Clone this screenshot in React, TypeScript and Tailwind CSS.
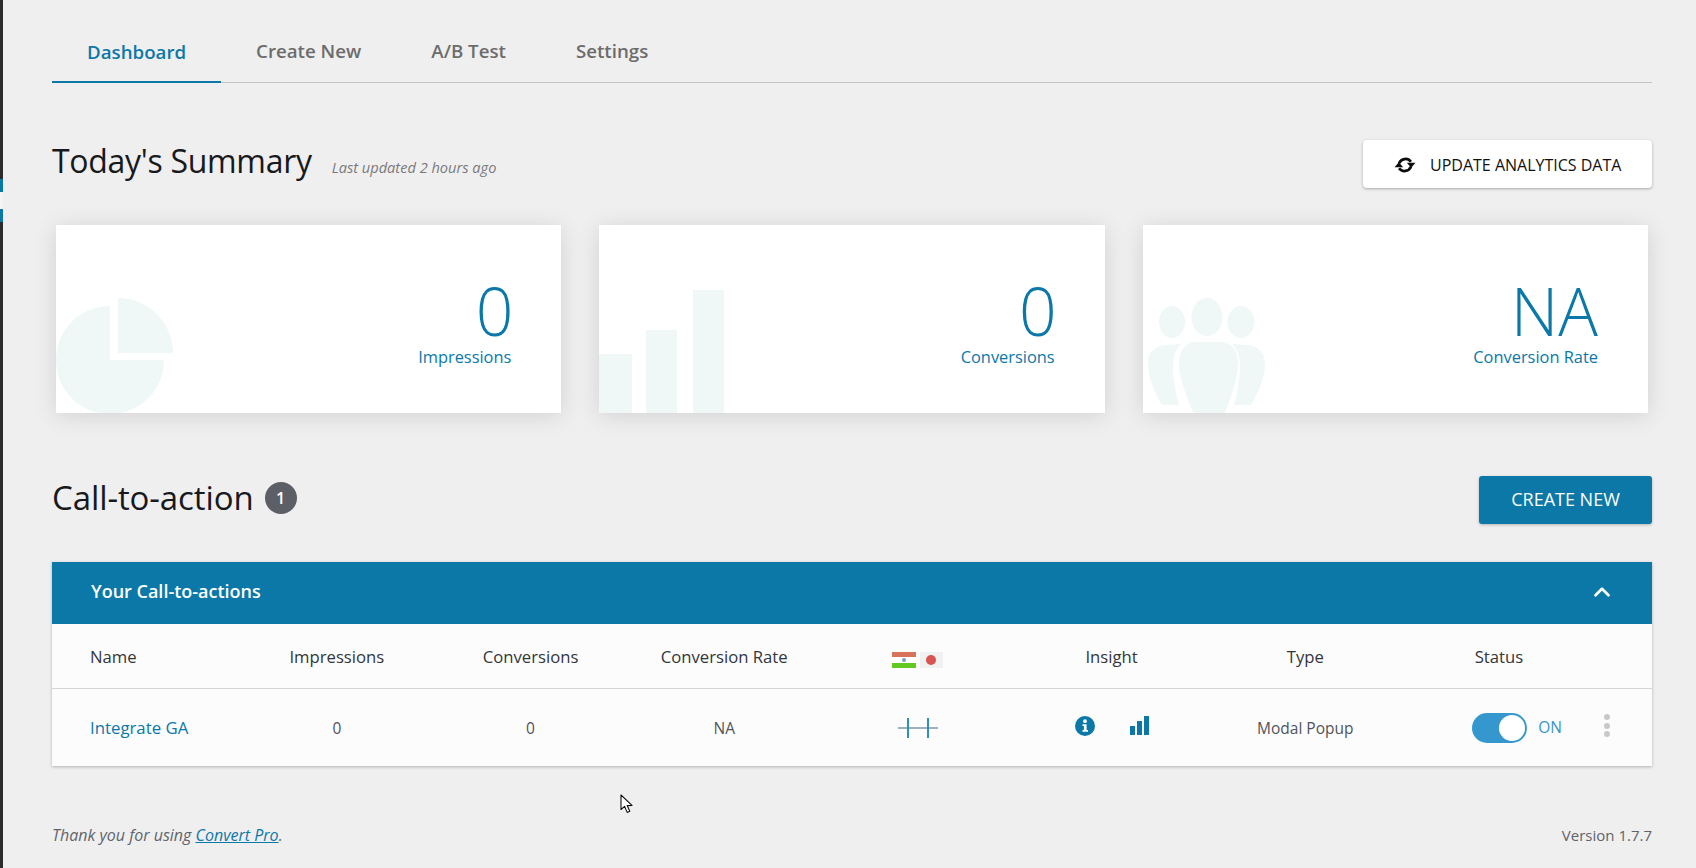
import { ChevronUp } from 'lucide-react';

const FONT = "font-['Open_Sans','Noto_Sans',sans-serif]";

const TABS = ['Dashboard', 'Create New', 'A/B Test', 'Settings'];
const COLUMNS = ['Impressions', 'Conversions', 'Conversion Rate'];

function PieMark() {
  return (
    <svg className="absolute left-0 bottom-0" width="125" height="120" viewBox="0 0 125 120" fill="#f0f7f7">
      <path d="M54 67 L54 13 A54 54 0 1 0 108 67 Z" />
      <path d="M62 5 A55 55 0 0 1 117 60 L62 60 Z" />
    </svg>
  );
}

function BarsMark() {
  return (
    <svg className="absolute left-0 bottom-0" width="125" height="123" viewBox="0 0 125 123" fill="#f0f7f7">
      <rect x="0" y="64" width="33" height="59" />
      <rect x="47" y="40" width="31" height="83" />
      <rect x="94" y="0" width="31" height="123" />
    </svg>
  );
}

function PeopleMark() {
  return (
    <svg className="absolute left-[4px] bottom-0" width="120" height="116" viewBox="0 0 120 116" fill="#f0f7f7">
      <ellipse cx="25" cy="25" rx="13" ry="16" />
      <ellipse cx="94" cy="25" rx="13.5" ry="16" />
      <path d="M18 48 C8 50 1 55 1 66 C1 82 9 98 15 108 L32 108 C28 92 24 74 27 60 C28 55 31 50 34 47 Z" />
      <path d="M101 48 C111 50 118 55 118 66 C118 82 110 98 104 108 L87 108 C91 92 95 74 92 60 C91 55 88 50 85 47 Z" />
      <ellipse cx="60" cy="20" rx="15.5" ry="19" />
      <path d="M48 45 C38 46 32 54 32 66 C32 84 42 104 46 116 L78 116 C82 104 91 84 91 66 C91 54 85 46 75 45 Z" />
    </svg>
  );
}

function SyncIcon() {
  return (
    <svg width="22" height="20" viewBox="0 0 24 22" fill="none" stroke="#0c0c0c" strokeWidth="3">
      <path d="M5.5 9 A7.5 7.5 0 0 1 18.5 7.5" />
      <path d="M18.5 13 A7.5 7.5 0 0 1 5.5 14.5" />
      <path d="M14 8.5 H23.5 L18.8 14 Z" fill="#0c0c0c" stroke="none" />
      <path d="M0.5 13.5 H10 L5.2 8 Z" fill="#0c0c0c" stroke="none" />
    </svg>
  );
}

function StatCard({ value, label, mark }: { value: string; label: string; mark: React.ReactNode }) {
  return (
    <div className="relative h-[188px] flex-1 bg-white shadow-[0_3px_22px_rgba(0,0,0,0.12)] overflow-hidden">
      {mark}
      <div className="relative flex flex-col items-end pt-[53px] pr-[50px] text-[#0b78a8]">
        <span className={`text-[66px] leading-[64px] font-light ${value === '0' ? 'mr-[-2px]' : ''}`}>{value}</span>
        <span className="text-[16.4px] leading-[22px] mt-[4px]">{label}</span>
      </div>
    </div>
  );
}

export default function App() {
  return (
    <div className={`${FONT} relative flex min-h-[868px] bg-[#efeff0] text-[#1d2327] overflow-hidden`}>
      <div className="w-[3px] flex flex-col shrink-0">
        <div className="h-[179px] bg-[#2b2b2e]" />
        <div className="h-[13px] bg-[#0b78a8]" />
        <div className="h-[17px] bg-[#f4f4f4]" />
        <div className="h-[13px] bg-[#0b78a8]" />
        <div className="flex-1 bg-[#2b2b2e]" />
      </div>

      <div className="flex-1 pl-[49px] pr-[44px]">
        <div className="flex h-[83px] items-end border-b border-[#c3c4c7]">
          {TABS.map((t, i) => (
            <div key={t}
              className={`px-[35px] h-[83px] pt-[40px] text-[18.7px] leading-[24px] font-semibold ${i === 0 ? 'border-b-2 border-[#0b78a8] text-[#0b78a8] mb-[-1px]' : 'text-[#6c6c6c]'}`}>
              {t}
            </div>
          ))}
        </div>

        <div className="flex items-center justify-between mt-[57px] h-[48px]">
          <div className="flex items-baseline gap-[20px] mt-[-6px]">
            <h1 className="text-[32px] leading-[44px] font-normal tracking-[-0.3px] text-[#17191c]">Today's Summary</h1>
            <span className="text-[14.6px] italic text-[#7a7a7a]">Last updated 2 hours ago</span>
          </div>
          <button className="flex items-center gap-[14px] w-[289px] h-[48px] pl-[31px] pt-[2px] bg-white rounded-[4px] shadow-[0_1px_3px_rgba(0,0,0,0.3)] text-[16px] font-medium text-[#111]">
            <SyncIcon /> UPDATE ANALYTICS DATA
          </button>
        </div>

        <div className="flex gap-[38px] px-[4px] mt-[37px]">
          <StatCard value="0" label="Impressions" mark={<PieMark />} />
          <StatCard value="0" label="Conversions" mark={<BarsMark />} />
          <StatCard value="NA" label="Conversion Rate" mark={<PeopleMark />} />
        </div>

        <div className="flex items-center justify-between mt-[63px] h-[48px]">
          <div className="flex items-center gap-[11px] mt-[-4px]">
            <h2 className="text-[33px] leading-[44px] font-normal tracking-[-0.1px] text-[#17191c]">Call-to-action</h2>
            <span className="flex h-[32px] w-[32px] items-center justify-center rounded-full bg-[#5c5f66] text-[16px] font-semibold text-white">1</span>
          </div>
          <button className="w-[173px] h-[48px] pb-[2px] rounded-[3px] bg-[#0b78a8] text-[18px] text-white shadow-[0_1px_3px_rgba(0,0,0,0.25)]">CREATE NEW</button>
        </div>

        <div className="mt-[38px] bg-[#fcfcfd] shadow-[0_1px_3px_rgba(0,0,0,0.25)]">
          <div className="flex h-[62px] items-center justify-between bg-[#0b78a8] pl-[39px] pr-[37px] pb-[2px] text-white">
            <span className="text-[18px] font-semibold mb-[2px]">Your Call-to-actions</span>
            <ChevronUp size={26} strokeWidth={2.5} />
          </div>

          <div className="grid h-[65px] grid-cols-[188px_repeat(7,193.7px)_1fr] items-center border-b border-[#d5d5d8] pt-[2px] text-center text-[16.7px] font-medium text-[#33363a]">
            <span className="pl-[38px] text-left">Name</span>
            {COLUMNS.map(c => <span key={c}>{c}</span>)}
            <span className="flex justify-center gap-[4px] pt-[5px]">
              <svg width="24" height="16" viewBox="0 0 24 16">
                <rect width="24" height="5" fill="#d9745c" />
                <rect y="5" width="24" height="6" fill="#fff" />
                <rect y="11" width="24" height="5" fill="#63c81f" />
                <circle cx="12" cy="8" r="2" fill="#7ba3c9" />
              </svg>
              <svg width="23" height="16" viewBox="0 0 23 16">
                <rect width="23" height="16" fill="#f1f1f2" />
                <circle cx="11" cy="8" r="5" fill="#d9534f" />
              </svg>
            </span>
            <span>Insight</span>
            <span>Type</span>
            <span>Status</span>
            <span />
          </div>

          <div className="grid h-[77px] grid-cols-[188px_repeat(7,193.7px)_1fr] items-center text-center text-[15.5px] text-[#50545a]">
            <span className="pl-[38px] text-left text-[16.8px] text-[#0b78a8]">Integrate GA</span>
            <span className="pt-[2px]">0</span>
            <span className="pt-[2px]">0</span>
            <span className="pt-[2px]">NA</span>
            <span className="flex justify-center">
              <svg width="40" height="20" viewBox="0 0 40 20">
                <path d="M0 10 H40" stroke="#7d98aa" strokeWidth="1.5" />
                <path d="M10 0 V20 M30 0 V20" stroke="#2f8fb8" strokeWidth="2" />
              </svg>
            </span>
            <span className="flex items-center justify-center gap-[35px] pb-[3px]">
              <svg width="20" height="20" viewBox="0 0 20 20">
                <circle cx="10" cy="10" r="10" fill="#0b78a8" />
                <circle cx="10" cy="5.2" r="1.9" fill="#fff" />
                <path d="M7.5 8.2 H11.6 V14 H13 V15.8 H7.5 V14 H8.9 V10 H7.5 Z" fill="#fff" />
              </svg>
              <svg width="19" height="20" viewBox="0 0 19 20" fill="#0b78a8">
                <rect x="0" y="10" width="5" height="9" />
                <rect x="7" y="5" width="5" height="14" />
                <rect x="14" y="0" width="5" height="19" />
              </svg>
            </span>
            <span className="pt-[2px]">Modal Popup</span>
            <span className="flex items-center gap-[11px] pl-[70px]">
              <span className="flex h-[30px] w-[55px] items-center justify-end rounded-full bg-[#3498cf] pr-[2px]">
                <span className="h-[26px] w-[26px] rounded-full bg-white" />
              </span>
              <span className="text-[15.5px] text-[#3a94c4]">ON</span>
            </span>
            <span className="flex flex-col items-start gap-[2.5px] pl-[8px] pb-[4px]">
              <span className="h-[6px] w-[6px] rounded-full bg-[#c9c9cb]" />
              <span className="h-[6px] w-[6px] rounded-full bg-[#c9c9cb]" />
              <span className="h-[6px] w-[6px] rounded-full bg-[#c9c9cb]" />
            </span>
          </div>
        </div>

        <div className="mt-[57px] flex items-center justify-between text-[#60646a]">
          <span className="text-[16px] italic">Thank you for using <span className="text-[#0b78a8] underline">Convert Pro</span>.</span>
          <span className="text-[15px]">Version 1.7.7</span>
        </div>
      </div>

      <svg className="absolute left-[620px] top-[794px]" width="13" height="20" viewBox="0 0 13 20">
        <path d="M1 1 V15.5 L4.6 12.4 L7.2 18.4 L9.8 17.3 L7.2 11.6 L12 11.4 Z" fill="#fff" stroke="#111" strokeWidth="1.1" strokeLinejoin="round" />
      </svg>
    </div>
  );
}
